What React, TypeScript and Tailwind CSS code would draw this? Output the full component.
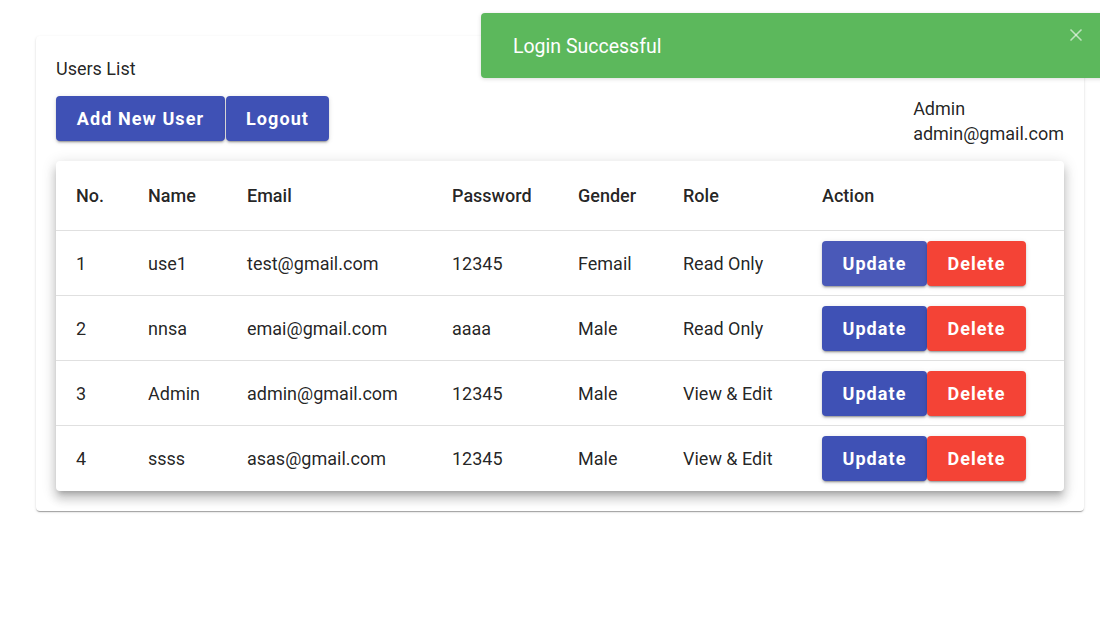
import { X } from 'lucide-react';

interface user {
  id: number;
  name: string;
  email: string;
  password: string;
  gender: string;
  role: string;
}

const users: Array<user> = [
  { id: 1, name: 'use1', email: 'test@gmail.com', password: '12345', gender: 'Femail', role: 'Read Only' },
  { id: 2, name: 'nnsa', email: 'emai@gmail.com', password: 'aaaa', gender: 'Male', role: 'Read Only' },
  { id: 3, name: 'Admin', email: 'admin@gmail.com', password: '12345', gender: 'Male', role: 'View & Edit' },
  { id: 4, name: 'ssss', email: 'asas@gmail.com', password: '12345', gender: 'Male', role: 'View & Edit' },
];

const btn = 'h-[45px] rounded-[4px] text-white text-[18px] font-bold tracking-[0.06em] shadow-[0_3px_1px_-2px_rgba(0,0,0,0.2),0_2px_2px_0_rgba(0,0,0,0.14),0_1px_5px_0_rgba(0,0,0,0.12)]';

function App() {
  return (
    <div className="relative w-[1100px] h-[622px] bg-white text-[rgba(0,0,0,0.87)] font-['Roboto',sans-serif] overflow-hidden">
      {/* toast */}
      <div className="absolute top-[13px] left-[481px] w-[660px] h-[65px] bg-[#5cb85c] rounded-[4px] flex items-center pl-[32px] pt-[2px] text-white text-[19.5px] font-normal shadow-[0_1px_4px_rgba(0,0,0,0.15)]">
        Login Successful
        <X className="absolute left-[585px] top-[12px] text-white/60" size={20} strokeWidth={2} />
      </div>

      <div className="pt-[36px] pl-[36px] pr-[16px]">
        <div className="rounded-[4px] bg-white px-[20px] pt-[20px] pb-[20px] shadow-[0_2px_1px_-1px_rgba(0,0,0,0.2),0_1px_1px_0_rgba(0,0,0,0.14),0_1px_3px_0_rgba(0,0,0,0.12)]">
          <div className="text-[18px] leading-[26px]">Users List</div>
          <div className="mt-[14px] flex justify-between items-start">
            <div className="flex">
              <button className={`${btn} w-[169px] bg-[#3f51b5]`}>Add New User</button>
              <button className={`${btn} w-[103px] ml-[1px] bg-[#3f51b5]`}>Logout</button>
            </div>
            <div className="text-[18px] leading-[25px]">
              <div>Admin</div>
              <div>admin@gmail.com</div>
            </div>
          </div>

          <div className="mt-[15px] bg-white rounded-[4px] shadow-[0_5px_5px_-3px_rgba(0,0,0,0.2),0_8px_10px_1px_rgba(0,0,0,0.14),0_3px_14px_2px_rgba(0,0,0,0.12)]">
            <table className="w-full table-fixed text-[18px] text-left">
              <colgroup>
                <col className="w-[72px]" />
                <col className="w-[99px]" />
                <col className="w-[205px]" />
                <col className="w-[126px]" />
                <col className="w-[105px]" />
                <col className="w-[139px]" />
                <col />
              </colgroup>
              <thead>
                <tr className="h-[69px] border-b border-[#e0e0e0]">
                  {['No.', 'Name', 'Email', 'Password', 'Gender', 'Role', 'Action'].map((h) => (
                    <th key={h} className="pl-[20px] font-medium">{h}</th>
                  ))}
                </tr>
              </thead>
              <tbody>
                {users.map((u, i) => {
                  const last = i === users.length - 1;
                  const cell = last ? 'pl-[20px]' : 'pl-[20px] pt-[2px]';
                  return (
                    <tr key={u.id} className={last ? 'h-[66px]' : 'h-[65px] border-b border-[#e0e0e0]'}>
                      <td className={cell}>{u.id}</td>
                      <td className={cell}>{u.name}</td>
                      <td className={cell}>{u.email}</td>
                      <td className={cell}>{u.password}</td>
                      <td className={cell}>{u.gender}</td>
                      <td className={cell}>{u.role}</td>
                      <td className={cell}>
                        <div className="flex">
                          <button className={`${btn} w-[105px] ${i === 0 ? 'bg-[#4a59b8] shadow-[0_2px_4px_-1px_rgba(0,0,0,0.2),0_4px_5px_0_rgba(0,0,0,0.14),0_1px_10px_0_rgba(0,0,0,0.12)]' : 'bg-[#3f51b5]'}`}>Update</button>
                          <button className={`${btn} w-[99px] bg-[#f44336]`}>Delete</button>
                        </div>
                      </td>
                    </tr>
                  );
                })}
              </tbody>
            </table>
          </div>
        </div>
      </div>
    </div>
  );
}

export default App;
